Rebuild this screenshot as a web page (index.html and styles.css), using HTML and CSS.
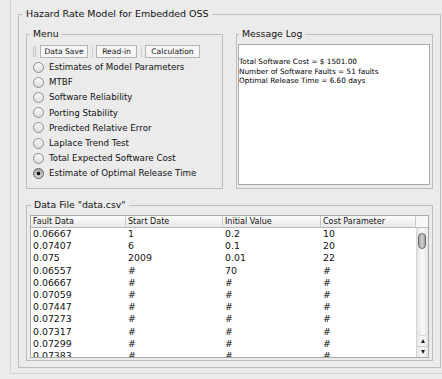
FILE: index.html
```html
<!DOCTYPE html>
<html>
<head>
  <title>Hazard Rate Model for Embedded OSS</title>
  <link rel="stylesheet" href="styles.css">
</head>
<body>
  <div class="window">
    <fieldset class="group outer">
      <legend>Hazard Rate Model for Embedded OSS</legend>
      <div class="top-row">
        <fieldset class="group menu">
          <legend>Menu</legend>
          <div class="toolbar">
            <span class="grip"></span>
            <span class="tool save">Data Save</span>
            <span class="sep"></span>
            <span class="tool readin">Read-in</span>
            <span class="sep"></span>
            <span class="tool calc">Calculation</span>
          </div>
          <div class="options">
            <label class="option"><input type="radio" name="mode">Estimates of Model Parameters</label>
            <label class="option"><input type="radio" name="mode">MTBF</label>
            <label class="option"><input type="radio" name="mode">Software Reliability</label>
            <label class="option"><input type="radio" name="mode">Porting Stability</label>
            <label class="option"><input type="radio" name="mode">Predicted Relative Error</label>
            <label class="option"><input type="radio" name="mode">Laplace Trend Test</label>
            <label class="option"><input type="radio" name="mode">Total Expected Software Cost</label>
            <label class="option"><input type="radio" name="mode" checked>Estimate of Optimal Release Time</label>
          </div>
        </fieldset>
        <fieldset class="group log">
          <legend>Message Log</legend>
          <div class="log-text">
            <div>Total Software Cost = $ 1501.00</div>
            <div>Number of Software Faults = 51 faults</div>
            <div>Optimal Release Time = 6.60 days</div>
          </div>
        </fieldset>
      </div>
      <fieldset class="group data">
        <legend>Data File "data.csv"</legend>
        <div class="table-wrap">
          <div class="thead">
            <div class="th">Fault Data</div>
            <div class="th">Start Date</div>
            <div class="th">Initial Value</div>
            <div class="th">Cost Parameter</div>
            <div class="th corner"></div>
          </div>
          <div class="tbody">
            <div class="rows">
              <div class="tr"><span>0.06667</span><span>1</span><span>0.2</span><span>10</span></div>
              <div class="tr"><span>0.07407</span><span>6</span><span>0.1</span><span>20</span></div>
              <div class="tr"><span>0.075</span><span>2009</span><span>0.01</span><span>22</span></div>
              <div class="tr"><span>0.06557</span><span>#</span><span>70</span><span>#</span></div>
              <div class="tr"><span>0.06667</span><span>#</span><span>#</span><span>#</span></div>
              <div class="tr"><span>0.07059</span><span>#</span><span>#</span><span>#</span></div>
              <div class="tr"><span>0.07447</span><span>#</span><span>#</span><span>#</span></div>
              <div class="tr"><span>0.07273</span><span>#</span><span>#</span><span>#</span></div>
              <div class="tr"><span>0.07317</span><span>#</span><span>#</span><span>#</span></div>
              <div class="tr"><span>0.07299</span><span>#</span><span>#</span><span>#</span></div>
              <div class="tr"><span>0.07383</span><span>#</span><span>#</span><span>#</span></div>
            </div>
            <div class="scrollbar">
              <div class="track"><div class="thumb"></div></div>
              <div class="arrow up"></div>
              <div class="arrow down"></div>
            </div>
          </div>
        </div>
      </fieldset>
    </fieldset>
  </div>
</body>
</html>
```

FILE: styles.css
```css
body {
  margin: 0;
  background: #ebebeb;
  font-family: "DejaVu Sans", Verdana, sans-serif;
  color: #111;
}

.window {
  margin-left: 10px;
  height: 374px;
  box-sizing: border-box;
  border-left: 1px solid #d2d2d2;
  border-bottom: 1px solid #d2d2d2;
  padding: 8px 1px 0 7px;
}

.group {
  margin: 0;
  min-width: 0;
  box-sizing: border-box;
  border: 1px solid #bdbdbd;
}

.group legend {
  padding: 0 3px;
  margin-left: -3px;
  font-size: 9.3px;
  line-height: 12px;
  color: #111;
}

.outer {
  height: 360px;
  padding: 8px 7px 6px 7px;
}

.outer > legend {
  font-size: 9.5px;
}

.top-row {
  display: flex;
  gap: 13px;
}

.menu {
  width: 197px;
  height: 161px;
  padding: 5px 6px 0 6px;
}

.log {
  width: 197px;
  height: 161px;
  padding: 4px 2px 3px 1px;
}

.log legend {
  margin-left: 1px;
}

/* toolbar */
.toolbar {
  display: flex;
  align-items: center;
  height: 13px;
}

.grip {
  width: 1px;
  height: 11px;
  border-left: 1px solid #c4c4c4;
  border-right: 1px solid #c4c4c4;
  margin-right: 4px;
}

.tool {
  height: 11px;
  border: 1px solid #b4b4b4;
  background: #f6f6f6;
  font-size: 7.6px;
  line-height: 11px;
  text-align: center;
  color: #111;
}

.save { width: 46px; }
.readin { width: 39px; }
.calc { width: 53px; }

.sep {
  width: 0;
  height: 11px;
  border-left: 1px dotted #b8b8b8;
  margin: 0 3px 0 4px;
}

/* radio list */
.options {
  margin-top: 1.5px;
}

.option {
  display: flex;
  align-items: center;
  height: 15.2px;
  font-size: 8.7px;
  color: #111;
}

.option input {
  appearance: none;
  width: 11px;
  height: 11px;
  margin: 0 5px 0 0;
  border: 1px solid #8c8c8c;
  border-radius: 50%;
  background: linear-gradient(#fafafa, #dcdcdc);
  box-sizing: border-box;
}

.option input:checked {
  border-color: #5e5e5e;
  background: radial-gradient(circle, #111 0 1.4px, transparent 2.2px), linear-gradient(#a8a8a8, #d8d8d8);
}

/* message log */
.log-text {
  height: 100%;
  box-sizing: border-box;
  background: #fff;
  border: 1px solid #a9a9a9;
  padding: 12px 0 0 0;
  font-size: 7.3px;
  line-height: 9.5px;
  color: #000;
}

/* data table */
.data {
  margin-top: 10px;
  height: 162px;
  padding: 4px 3px 2px 3px;
}

.data legend {
  margin-left: 1px;
}

.table-wrap {
  height: 143px;
  box-sizing: border-box;
  border: 1px solid #a9a9a9;
  background: #fff;
  overflow: hidden;
}

.thead {
  display: grid;
  grid-template-columns: 95px 97px 98px 95px 1fr;
  height: 12px;
  box-sizing: border-box;
  border-bottom: 1px solid #b9b9b9;
  background: linear-gradient(#fdfdfd, #e8e8e8);
}

.th {
  font-size: 8px;
  line-height: 11px;
  padding-left: 2px;
  border-right: 1px solid #c9c9c9;
  color: #111;
}

.th.corner {
  border-right: none;
  background: #f8f8f8;
}

.tbody {
  display: flex;
  height: 130px;
}

.rows {
  width: 385px;
}

.tr {
  display: grid;
  grid-template-columns: 95px 97px 98px 95px;
  height: 12.2px;
  font-size: 9.4px;
  line-height: 12.2px;
  color: #111;
}

.tr span {
  padding-left: 2px;
}

.scrollbar {
  flex: 1;
  display: flex;
  flex-direction: column;
  border-left: 1px solid #d4d4d4;
  background: linear-gradient(to right, #e6e6e6, #f9f9f9 50%, #e6e6e6);
}

.track {
  flex: 1;
  padding: 5px 0 0 1px;
  border-bottom: 1px solid #cfcfcf;
  border-radius: 0 0 5px 5px;
}

.thumb {
  width: 8px;
  height: 16px;
  box-sizing: border-box;
  border: 1.5px solid #6a6a6a;
  border-radius: 4px;
  background: linear-gradient(to right, #9b9b9b, #d4d4d4, #9b9b9b);
}

.arrow {
  height: 10px;
  position: relative;
  border-bottom: 1px solid #cfcfcf;
}

.arrow::after {
  content: "";
  position: absolute;
  left: 4px;
  top: 3px;
  border-left: 2.5px solid transparent;
  border-right: 2.5px solid transparent;
}

.arrow.up::after {
  border-bottom: 4px solid #222;
}

.arrow.down::after {
  border-top: 4px solid #222;
}
```
